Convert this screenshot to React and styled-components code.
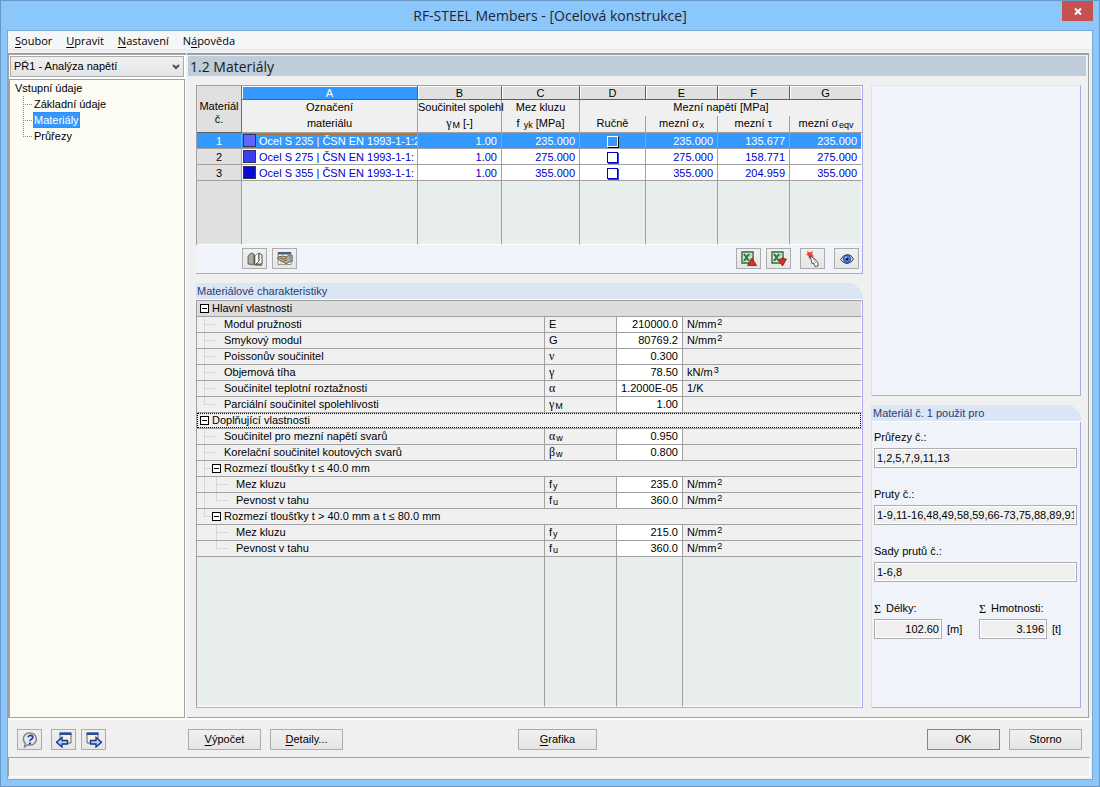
// react
import React, { useState } from 'react'

// styled
import styled, { createGlobalStyle, css } from 'styled-components'

const colors = {
	line: '#a0a0a0',
	face: '#f0f0f0',
	blue: '#3399ff',
	empty: '#e8eeee',
	panel: '#f0f4fa',
	purple: '#a9a9ee',
	caption: '#dbe5f4',
	ink: '#0000c8'
}

const ui = `'Open Sans', 'Noto Sans', sans-serif`
const sans = `'Liberation Sans', Arial, sans-serif`
const symbol = `'Liberation Serif', 'Times New Roman', serif`

const materials = [
	{ id: 1, color: '#6464ff', name: 'Ocel S 235 | ČSN EN 1993-1-1:2', gamma: '1.00', fyk: '235.000', x: '235.000', t: '135.677', eqv: '235.000' },
	{ id: 2, color: '#3c3cf0', name: 'Ocel S 275 | ČSN EN 1993-1-1:', gamma: '1.00', fyk: '275.000', x: '275.000', t: '158.771', eqv: '275.000' },
	{ id: 3, color: '#0a0ad2', name: 'Ocel S 355 | ČSN EN 1993-1-1:', gamma: '1.00', fyk: '355.000', x: '355.000', t: '204.959', eqv: '355.000' }
]

const properties = [
	{ group: 'Hlavní vlastnosti', level: 0, shaded: true },
	{ name: 'Modul pružnosti', level: 1, sym: 'E', value: '210000.0', unit: 'N/mm', power: '2' },
	{ name: 'Smykový modul', level: 1, sym: 'G', value: '80769.2', unit: 'N/mm', power: '2' },
	{ name: 'Poissonův součinitel', level: 1, greek: 'ν', value: '0.300' },
	{ name: 'Objemová tíha', level: 1, greek: 'γ', value: '78.50', unit: 'kN/m', power: '3' },
	{ name: 'Součinitel teplotní roztažnosti', level: 1, greek: 'α', value: '1.2000E-05', unit: '1/K' },
	{ name: 'Parciální součinitel spolehlivosti', level: 1, greek: 'γ', sub: 'M', value: '1.00', last: true },
	{ group: 'Doplňující vlastnosti', level: 0, focused: true },
	{ name: 'Součinitel pro mezní napětí svarů', level: 1, greek: 'α', sub: 'w', value: '0.950' },
	{ name: 'Korelační součinitel koutových svarů', level: 1, greek: 'β', sub: 'w', value: '0.800' },
	{ group: 'Rozmezí tloušťky t ≤ 40.0 mm', level: 1 },
	{ name: 'Mez kluzu', level: 2, outer: true, sym: 'f', sub: 'y', value: '235.0', unit: 'N/mm', power: '2' },
	{ name: 'Pevnost v tahu', level: 2, outer: true, sym: 'f', sub: 'u', value: '360.0', unit: 'N/mm', power: '2', last: true },
	{ group: 'Rozmezí tloušťky t > 40.0 mm a t ≤ 80.0 mm', level: 1, last: true },
	{ name: 'Mez kluzu', level: 2, sym: 'f', sub: 'y', value: '215.0', unit: 'N/mm', power: '2' },
	{ name: 'Pevnost v tahu', level: 2, sym: 'f', sub: 'u', value: '360.0', unit: 'N/mm', power: '2', last: true }
]

const menu = [['', 'S', 'oubor'], ['', 'U', 'pravit'], ['', 'N', 'astavení'], ['N', 'á', 'pověda']]
const pages = ['Základní údaje', 'Materiály', 'Průřezy']

// icons
const BookIcon = () => (
	<Icon viewBox='0 0 16 16'>
		<path d='M1 5l3-3 3 1v11l-6-1z' fill='#9a9e94' stroke='#55564c' strokeWidth='.8'/>
		<path d='M3 4v8M5 3v9' stroke='#c4c8ba' strokeWidth='.8'/>
		<path d='M7 3l1 2v9l-1-1z' fill='#44443c'/>
		<path d='M8 5l3-3 1 8-4 4z' fill='#fff' stroke='#77776a' strokeWidth='.7'/>
		<path d='M12 2l3 2v9H9l3-3z' fill='#f3f6ea' stroke='#44453c' strokeWidth='.9'/>
		<path d='M8 14h7' stroke='#33332c'/>
	</Icon>
)

const HandIcon = () => (
	<Icon viewBox='0 0 16 16'>
		<path d='M1 1.500h13v12H1z' fill='#f2f2ea' stroke='#77776c' strokeWidth='.8'/>
		<path d='M1 1h13v2.500H1z' fill='#465e80'/>
		<path d='M3 11h8M3 13h7' stroke='#b8b8a8' strokeWidth='.8'/>
		<path d='M1 6l5-1 3 1 3-2 4 1v5l-4 1-3 2-2-2-3-1-3-2z' fill='#c3ab83' stroke='#51473a' strokeWidth='.8'/>
		<path d='M12 4l4 1v5l-3 1z' fill='#8296ae'/>
		<path d='M3 7l4 1 3-1M7 10l3-1' stroke='#6d5b41' fill='none' strokeWidth='.8'/>
	</Icon>
)

const SheetIcon = ({ up }) => (
	<Icon viewBox='0 0 16 16'>
		<path d='M1 1h11v11H1z' fill='#dfeada' stroke='#2f6b44' strokeWidth='1.400'/>
		<path d='M1 4h11M1 9h11M9 1v11' stroke='#8fb596' strokeWidth='.7'/>
		<path d='M3 3l5 7M8 3l-5 7' stroke='#2c7a3e' strokeWidth='2'/>
		{up
			? <path d='M11 7l4.500 7.500h-9z' fill='#d8321f' stroke='#7c1b12' strokeWidth='.8'/>
			: <path d='M9 8h2V7h2v1h2.500L11.500 15 7.500 9.500z' fill='#d8321f' stroke='#7c1b12' strokeWidth='.8'/>}
	</Icon>
)

const PickIcon = () => (
	<Icon viewBox='0 0 16 16'>
		<path d='M2 0l3 1.500L8 0 7 3l2 2.500-3 .5L4 8 3.500 5 1 3.500l1.500-.5z' fill='#e34434'/>
		<path d='M5 5l5 3 3 4v3l-3 .5L8.500 12 7 12.500z' fill='#fff' stroke='#444' strokeWidth='.9'/>
		<path d='M8 8l3 4M10 15l-1-3' stroke='#888' strokeWidth='.8'/>
	</Icon>
)

const EyeIcon = () => (
	<Icon viewBox='0 0 16 16'>
		<path d='M1.500 8.500Q4.500 3.500 8.500 3.500T14.500 8Q12 12.500 8 12.500T1.500 8.500z' fill='#d9e2f2' stroke='#2c3c63' strokeWidth='1'/>
		<circle cx='8' cy='8' r='3.800' fill='#4a80e4' stroke='#223f8a' strokeWidth='.8'/>
		<circle cx='8' cy='8' r='1.500' fill='#0b1538'/>
		<circle cx='7' cy='6.500' r='.8' fill='#fff'/>
	</Icon>
)

const HelpIcon = () => (
	<Icon viewBox='0 0 16 16'>
		<path d='M8.500 1a6 6 0 1 1-2.500 11.500L2.500 15l.8-3.800A6 6 0 0 1 8.500 1z' fill='#e4e9ee' stroke='#808286' strokeWidth='1.400'/>
		<path d='M6 5.200Q6.500 3.200 8.700 3.300 11 3.600 10.800 5.500 10.500 6.800 9 7.500 8 8 8 9.300' fill='none' stroke='#2a3c96' strokeWidth='1.700'/>
		<path d='M7 10.500h2v1.800H7z' fill='#2a3c96'/>
	</Icon>
)

const StepIcon = ({ forward }) => (
	<Icon viewBox='0 0 16 16'>
		{forward
			? <>
				<path d='M1 1h11v10H1z' fill='#f4f2e8' stroke='#66665f'/>
				<path d='M.5.5h12V3H.5z' fill='#284f9e'/>
				<path d='M4.500 8.500H10V5.500l5.500 4.700L10 15v-3H4.500z' fill='#a5d4fa' stroke='#1d2f86' strokeWidth='1.300'/>
			</>
			: <>
				<path d='M4 1h11v10H4z' fill='#f4f2e8' stroke='#66665f'/>
				<path d='M3.500.5h12V3h-12z' fill='#284f9e'/>
				<path d='M11.500 8.500H6V5.500L.5 10.200 6 15v-3h5.500z' fill='#a5d4fa' stroke='#1d2f86' strokeWidth='1.300'/>
			</>}
	</Icon>
)

// components
const Hotkey = ({ parts: [before, key, after] }) => <>{before}<u>{key}</u>{after}</>

const Sidebar = () => {
	const [page, setPage] = useState('Materiály')
	return (
		<Side>
			<Combo>
				<select aria-label='Případ'>
					<option>PŘ1 - Analýza napětí</option>
				</select>
				<svg viewBox='0 0 8 6'><path d='M1 1l3 3 3-3' fill='none' stroke='#505050' strokeWidth='2'/></svg>
			</Combo>
			<Tree>
				<span>Vstupní údaje</span>
				<ul>
					{pages.map(item => (
						<Leaf key={item}>
							<LeafButton $active={item === page} onClick={() => setPage(item)}>{item}</LeafButton>
						</Leaf>
					))}
				</ul>
			</Tree>
		</Side>
	)
}

const MaterialGrid = () => (
	<MaterialTable>
		<colgroup>
			<col style={{ width: 45 }}/>
			<col/>
			{[84, 78, 66, 72, 72, 72].map((width, i) => <col key={i} style={{ width }}/>)}
		</colgroup>
		<thead>
			<tr>
				<Corner rowSpan={3}>Materiál<br/>č.</Corner>
				{['A', 'B', 'C', 'D', 'E', 'F', 'G'].map(letter => (
					<Letter key={letter} $active={letter === 'A'}>{letter}</Letter>
				))}
			</tr>
			<tr>
				<Head>Označení</Head>
				<Head>Součinitel spolehl</Head>
				<Head>Mez kluzu</Head>
				<Head colSpan={4} $open>Mezní napětí [MPa]</Head>
			</tr>
			<tr>
				<Head $bottom>materiálu</Head>
				<Head $bottom><Greek>γ</Greek><Sub>M</Sub> [-]</Head>
				<Head $bottom>f <Sub>yk</Sub> [MPa]</Head>
				<Head $bottom>Ručně</Head>
				<Head $bottom>mezní <Greek>σ</Greek><Sub>x</Sub></Head>
				<Head $bottom>mezní <Greek>τ</Greek></Head>
				<Head $bottom $open>mezní <Greek>σ</Greek><Sub>eqv</Sub></Head>
			</tr>
		</thead>
		<tbody>
			{materials.map((m, i) => (
				<MaterialRow key={m.id} $active={i === 0}>
					<RowHead scope='row' $active={i === 0}>{m.id}</RowHead>
					<td>
						<Material>
							<Swatch $color={m.color}/>
							<MaterialName $active={i === 0}>{m.name}</MaterialName>
						</Material>
					</td>
					<Num>{m.gamma}</Num>
					<Num>{m.fyk}</Num>
					<td><Tick type='checkbox' aria-label={`Ručně ${m.id}`} $active={i === 0}/></td>
					<Num>{m.x}</Num>
					<Num>{m.t}</Num>
					<Num>{m.eqv}</Num>
				</MaterialRow>
			))}
			<Filler>
				<th/>
				{[1, 2, 3, 4, 5, 6, 7].map(n => <td key={n}/>)}
			</Filler>
		</tbody>
	</MaterialTable>
)

const PropertyRow = ({ row }) => {
	const { group, level, last, outer } = row
	if (group) {
		return (
			<tr>
				<GroupCell colSpan={4} $shaded={row.shaded}>
					<Name $focused={row.focused} $indent={level === 0 ? 3 : 7}>
						{level > 0 && <Guide $width={8} $arm={7} $last={last}/>}
						<Toggle aria-label={group}/>
						{group}
					</Name>
				</GroupCell>
			</tr>
		)
	}
	return (
		<tr>
			<td>
				<Name $indent={7}>
					{level === 2 && <Guide $width={12} $arm={0} $hidden={!outer}/>}
					<Guide $width={20} $arm={12} $last={last}/>
					{row.name}
				</Name>
			</td>
			<Sym>{row.sym}{row.greek && <Greek>{row.greek}</Greek>}{row.sub && <Sub>{row.sub}</Sub>}</Sym>
			<Value>{row.value}</Value>
			<Unit>{row.unit}{row.power && <Sup>{row.power}</Sup>}</Unit>
		</tr>
	)
}

const Usage = () => (
	<Panel>
		<Caption>Materiál č. 1 použit pro</Caption>
		<Fields>
			<Field>Průřezy č.:<input readOnly value='1,2,5,7,9,11,13'/></Field>
			<Field>Pruty č.:<input readOnly value='1-9,11-16,48,49,58,59,66-73,75,88,89,91,'/></Field>
			<Field>Sady prutů č.:<input readOnly value='1-6,8'/></Field>
			<Sums>
				<Sum>
					<label htmlFor='length'><Greek>Σ</Greek>Délky:</label>
					<div><input id='length' readOnly value='102.60'/>[m]</div>
				</Sum>
				<Sum>
					<label htmlFor='mass'><Greek>Σ</Greek>Hmotnosti:</label>
					<div><input id='mass' readOnly value='3.196'/>[t]</div>
				</Sum>
			</Sums>
		</Fields>
	</Panel>
)

const App = () => (
	<Window>
		<GlobalStyle/>
		<TitleBar>
			<h1>RF-STEEL Members - [Ocelová konstrukce]</h1>
			<Close aria-label='Zavřít'>
				<svg viewBox='0 0 8 7'><path d='M1 .5l6 6M7 .5l-6 6' stroke='#fff' strokeWidth='2'/></svg>
			</Close>
		</TitleBar>
		<Client>
			<Menu>
				{menu.map(parts => <button key={parts.join('')}><Hotkey parts={parts}/></button>)}
			</Menu>
			<Workspace>
				<Sidebar/>
				<Main>
					<PageTitle>1.2 Materiály</PageTitle>
					<Content>
						<Column>
							<Panel>
								<MaterialGrid/>
								<Toolbar>
									<IconButton aria-label='Knihovna'><BookIcon/></IconButton>
									<IconButton aria-label='Upravit materiál'><HandIcon/></IconButton>
									<Spacer/>
									<IconButton aria-label='Export'><SheetIcon up/></IconButton>
									<IconButton aria-label='Import'><SheetIcon/></IconButton>
									<Gap/>
									<IconButton aria-label='Vybrat'><PickIcon/></IconButton>
									<Gap/>
									<IconButton aria-label='Zobrazit'><EyeIcon/></IconButton>
								</Toolbar>
							</Panel>
							<Panel $grow>
								<Caption>Materiálové charakteristiky</Caption>
								<PropertyBox>
									<PropertyTable>
										<colgroup>
											<col/>
											<col style={{ width: 72 }}/>
											<col style={{ width: 66 }}/>
											<col style={{ width: 179 }}/>
										</colgroup>
										<tbody>
											{properties.map((row, i) => <PropertyRow key={i} row={row}/>)}
											<Filler><td/><td/><td/><td/></Filler>
										</tbody>
									</PropertyTable>
								</PropertyBox>
							</Panel>
						</Column>
						<Aside>
							<Panel/>
							<Usage/>
						</Aside>
					</Content>
				</Main>
			</Workspace>
			<Footer>
				<IconButton aria-label='Nápověda'><HelpIcon/></IconButton>
				<Gap/>
				<IconButton aria-label='Předchozí'><StepIcon/></IconButton>
				<IconButton aria-label='Další'><StepIcon forward/></IconButton>
				<Commands>
					<Button><Hotkey parts={['', 'V', 'ýpočet']}/></Button>
					<Button><Hotkey parts={['', 'D', 'etaily...']}/></Button>
					<Middle><Button $wide><Hotkey parts={['', 'G', 'rafika']}/></Button></Middle>
					<Button $primary>OK</Button>
					<Button>Storno</Button>
				</Commands>
			</Footer>
			<Status/>
		</Client>
	</Window>
)

export default App

const GlobalStyle = createGlobalStyle`
	*, *::before, *::after {
		box-sizing: border-box;
	}

	body {
		margin: 0;
		color: #000;
		font: 11px/15px ${sans};
	}

	button, input, select {
		margin: 0;
		padding: 0;
		border-radius: 0;
		color: inherit;
		font: inherit;
	}

	h1, h2, ul {
		margin: 0;
		padding: 0;
		list-style: none;
	}
`

const Window = styled.div`
	display: flex;
	flex-direction: column;
	min-height: 100vh;
	padding: 0 6px 6px;
	border: 1px solid #6a98c6;
	background: #8cc7fb;
`

const TitleBar = styled.header`
	display: grid;
	grid-template-columns: 31px 1fr 31px;
	height: 29px;

	h1 {
		grid-column: 2;
		color: #1c2530;
		font: 14px/30px ${ui};
		text-align: center;
	}
`

const Close = styled.button`
	height: 20px;
	border: 0;
	background: #c75050;

	svg {
		display: block;
		width: 8px;
		height: 7px;
		margin: 0 auto;
	}
`

const Client = styled.div`
	display: flex;
	flex: 1;
	flex-direction: column;
	border: 1px solid #7aa9d3;
	background: ${colors.face};
`

const Menu = styled.nav`
	display: flex;
	gap: 14px;
	height: 19px;
	padding: 0 7px;
	border-bottom: 1px solid #e6e6e6;
	background: #f5f6f7;

	button {
		border: 0;
		background: none;
		font: 11px/19px ${ui};
	}

	u {
		text-underline-offset: 2px;
	}
`

const Workspace = styled.div`
	display: grid;
	flex: 1;
	grid-template-columns: 178px 1fr;
	gap: 1px;
	margin-top: 3px;
	padding-right: 3px;
	border-bottom: 2px solid #fff;
`

const Side = styled.aside`
	display: flex;
	flex-direction: column;
	gap: 2px;
	padding-top: 1px;
	padding-right: 1px;
	border-top: 2px solid ${colors.line};
	border-left: 1px solid ${colors.line};
	background: #fff;
`

const Combo = styled.div`
	display: grid;
	align-items: center;
	height: 21px;
	margin: 0 1px;

	select, svg {
		grid-area: 1 / 1;
	}

	select {
		height: 21px;
		padding: 0 3px;
		border: 1px solid #acacac;
		appearance: none;
		background: linear-gradient(#f0f0f0, #e5e5e5);
	}

	svg {
		width: 8px;
		height: 6px;
		margin-right: 4px;
		justify-self: end;
		pointer-events: none;
	}
`

const Tree = styled.div`
	flex: 1;
	padding: 0 5px;
	border: 1px solid ${colors.line};
	background: #fcfcf4;
	line-height: 16px;

	ul {
		padding-left: 8px;
	}
`

const Leaf = styled.li`
	display: flex;
	height: 16px;
	background:
		repeating-linear-gradient(to bottom, #888 0 1px, transparent 1px 2px) 0 0 / 1px 100% no-repeat,
		repeating-linear-gradient(to right, #888 0 1px, transparent 1px 2px) 0 8px / 9px 1px no-repeat;

	&:last-child {
		background-size: 1px 9px, 9px 1px;
	}
`

const LeafButton = styled.button`
	margin-left: 10px;
	padding: 0;
	border: 1px dotted transparent;
	background: none;
	line-height: 14px;
	${props => props.$active && css`
		border-color: #c86400;
		background: ${colors.blue};
		color: #fff;
	`}
`

const Main = styled.main`
	display: flex;
	flex-direction: column;
	padding: 1px 0 0;
	border: 1px solid ${colors.line};
	border-width: 2px 1px 1px 0;
`

const PageTitle = styled.h2`
	height: 20px;
	margin: 0 2px 0 1px;
	padding-left: 2px;
	background: #bfccda;
	color: #1a1a1a;
	font: 14px/21px ${ui};
`

const Content = styled.div`
	display: grid;
	flex: 1;
	grid-template-columns: 1fr 210px;
	gap: 8px;
	padding: 9px 7px 9px 9px;
`

const Column = styled.div`
	display: flex;
	flex-direction: column;
	gap: 9px;
	min-width: 0;
`

const Aside = styled.div`
	display: grid;
	grid-template-rows: 311px 1fr;
	gap: 9px;
	min-width: 0;

	> section {
		border-left: 1px solid ${colors.caption};
	}

	> section:first-child {
		border-top: 1px solid ${colors.caption};
	}
`

const Panel = styled.section`
	display: flex;
	flex: ${props => props.$grow ? '1' : 'none'};
	flex-direction: column;
	border-right: 1px solid ${colors.purple};
	border-bottom: 1px solid ${colors.purple};
	background: ${colors.panel};
`

const Caption = styled.h2`
	flex: none;
	height: 17px;
	margin-right: -1px;
	padding-left: 1px;
	border-bottom: 1px solid #fff;
	background: linear-gradient(225deg, ${colors.face} 7px, ${colors.caption} 7px);
	color: #1f3c78;
	font: 11px/16px ${sans};
`

const grid = css`
	width: 100%;
	border-left: 1px solid ${colors.line};
	border-top: 1px solid ${colors.line};
	border-spacing: 0;
	table-layout: fixed;

	th, td {
		overflow: hidden;
		padding: 0;
		border-right: 1px solid ${colors.line};
		border-bottom: 1px solid ${colors.line};
		line-height: 15px;
		white-space: nowrap;
	}

	th {
		font-weight: normal;
	}

	td:last-child {
		border-right-color: #fff;
	}
`

const MaterialTable = styled.table`
	${grid}
`

const Corner = styled.th`
	background: #e0e0e0;

	&& {
		padding-top: 8px;
		border-right-color: #707070;
		border-bottom-color: #606060;
		line-height: 13px;
	}
`

const Letter = styled.th`
	height: 14px;
	background: ${props => props.$active ? colors.blue : '#e0e0e0'};
	box-shadow: inset 1px 1px #fff;
	color: ${props => props.$active ? '#fff' : '#000'};

	&& {
		border-color: #606060;
		line-height: 12px;
	}

	&&:last-child {
		border-right-color: #fff;
	}
`

const Head = styled.th`
	height: ${props => props.$bottom ? 17 : 16}px;
	background: ${colors.face};
	vertical-align: top;

	&& {
		overflow: visible;
		border-right-width: ${props => props.$open ? 0 : 1}px;
		border-bottom-width: ${props => props.$bottom ? 1 : 0}px;
		line-height: 14px;
	}
`

const MaterialRow = styled.tr`
	height: 16px;
	background: ${props => props.$active ? colors.blue : '#fff'};
	color: ${props => props.$active ? '#fff' : colors.ink};

	&& > * {
		padding-top: 1px;
		line-height: 14px;
	}
`

const RowHead = styled.th`
	background: ${props => props.$active ? colors.blue : '#e0e0e0'};
	color: ${props => props.$active ? '#fff' : '#000'};
`

const Num = styled.td`
	text-align: right;

	&& {
		padding-right: 4px;
	}
`

const Material = styled.div`
	display: flex;
	height: 14px;
`

const Swatch = styled.span`
	flex: none;
	width: 13px;
	height: 13px;
	margin: 0 1px;
	border: 1px solid #333355;
	background: ${props => props.$color};
`

const MaterialName = styled.span`
	flex: 1;
	padding-left: 1px;
	border: 1px dotted ${props => props.$active ? '#b06a20' : 'transparent'};
	line-height: 12px;
`

const Tick = styled.input`
	display: block;
	width: 11px;
	height: 11px;
	margin: 0 auto;
	border: 1px solid ${props => props.$active ? '#fff' : colors.ink};
	appearance: none;
	background: ${props => props.$active ? colors.blue : '#fff'};
	box-shadow: 1px 1px ${props => props.$active ? '#000' : '#3c3cf0'};
`

const Filler = styled.tr`
	height: 64px;

	th {
		background: #e0e0e0;
	}

	td {
		background: ${colors.empty};
	}

	&& > * {
		border-bottom-color: #fff;
	}
`

const Toolbar = styled.div`
	display: flex;
	gap: 5px;
	height: 28px;
	padding: 3px 3px 0 46px;
`

const Spacer = styled.span`
	flex: 1;
`

const Gap = styled.span`
	width: 0;
	margin-left: -1px;
`

const IconButton = styled.button`
	display: grid;
	width: 25px;
	height: 21px;
	border: 1px solid #acacac;
	background: linear-gradient(#f0f0f0, #e6e6e6);
	place-items: center;
`

const Icon = styled.svg`
	display: block;
	width: 16px;
	height: 16px;
`

const PropertyBox = styled.div`
	display: grid;
	flex: 1;
`

const PropertyTable = styled.table`
	${grid}
	height: 100%;

	tr:not(:last-child) {
		height: 16px;
	}

	td {
		background: ${colors.face};
	}

	tr:last-child {
		height: auto;

		td {
			background: ${colors.empty};
		}
	}
`

const GroupCell = styled.td`
	&& {
		background: ${props => props.$shaded ? '#dcdcdc' : colors.face};
	}
`

const Name = styled.div`
	display: flex;
	align-items: center;
	height: 15px;
	padding-left: ${props => props.$indent}px;
	${props => props.$focused && css`
		outline: 1px dotted #000;
		outline-offset: -1px;
	`}
`

const Guide = styled.span`
	flex: none;
	align-self: stretch;
	width: ${props => props.$width}px;
	background:
		linear-gradient(#d6d6d6, #d6d6d6) 0 0 / 1px ${props => props.$last ? '8px' : '100%'} no-repeat,
		linear-gradient(#d6d6d6, #d6d6d6) 0 7px / ${props => props.$arm}px 1px no-repeat;
	visibility: ${props => props.$hidden ? 'hidden' : 'visible'};
`

const Toggle = styled.button`
	flex: none;
	width: 9px;
	height: 9px;
	margin-right: 3px;
	border: 1px solid #000;
	background: linear-gradient(#000, #000) center / 5px 1px no-repeat #fff;
`

const Sym = styled.td`
	&& {
		padding-left: 4px;
	}
`

const Value = styled(Num)`
	&& {
		background: #fff;
	}
`

const Unit = styled.td`
	&& {
		padding-left: 4px;
	}
`

const Greek = styled.span`
	font-family: ${symbol};
	font-size: 12px;
	line-height: 1;
`

const Sub = styled.sub`
	margin-left: 1px;
	font-size: 9px;
	line-height: 1;
	vertical-align: -1px;
`

const Sup = styled.sup`
	margin-left: 1px;
	font-size: 9px;
	line-height: 1;
	vertical-align: 3px;
`

const input = css`
	height: 20px;
	padding: 0 2px;
	border: 1px solid #abadb3;
	background: ${colors.face};
	box-shadow: inset 0 0 0 1px #fff;
`

const Fields = styled.div`
	display: grid;
	gap: 19px;
	padding: 8px 3px 0 2px;
`

const Field = styled.label`
	display: grid;
	gap: 3px;

	input {
		${input}
		width: 100%;
	}
`

const Sums = styled.div`
	display: grid;
	grid-template-columns: 105px 1fr;
`

const Sum = styled.div`
	display: grid;
	gap: 3px;

	label {
		display: flex;
		gap: 5px;
		align-items: center;
	}

	div {
		display: flex;
		gap: 5px;
		align-items: center;
	}

	input {
		${input}
		width: 68px;
		text-align: right;
	}
`

const Footer = styled.footer`
	display: flex;
	gap: 5px;
	padding: 9px 10px 7px 9px;
`

const Commands = styled.div`
	display: flex;
	flex: 1;
	gap: 9px;
	margin-left: 77px;
`

const Button = styled.button`
	width: ${props => props.$wide ? 79 : 73}px;
	height: 21px;
	border: 1px solid ${props => props.$primary ? colors.blue : '#acacac'};
	background: linear-gradient(#f0f0f0, #e5e5e5);

	u {
		text-underline-offset: 2px;
	}
`

const Middle = styled.div`
	flex: 1;
	padding-left: 166px;
`

const Status = styled.div`
	height: 20px;
	margin: 0 2px 2px 0;
	border: 1px solid ${colors.line};
	border-right-color: #fff;
	border-bottom-color: #fff;
`
